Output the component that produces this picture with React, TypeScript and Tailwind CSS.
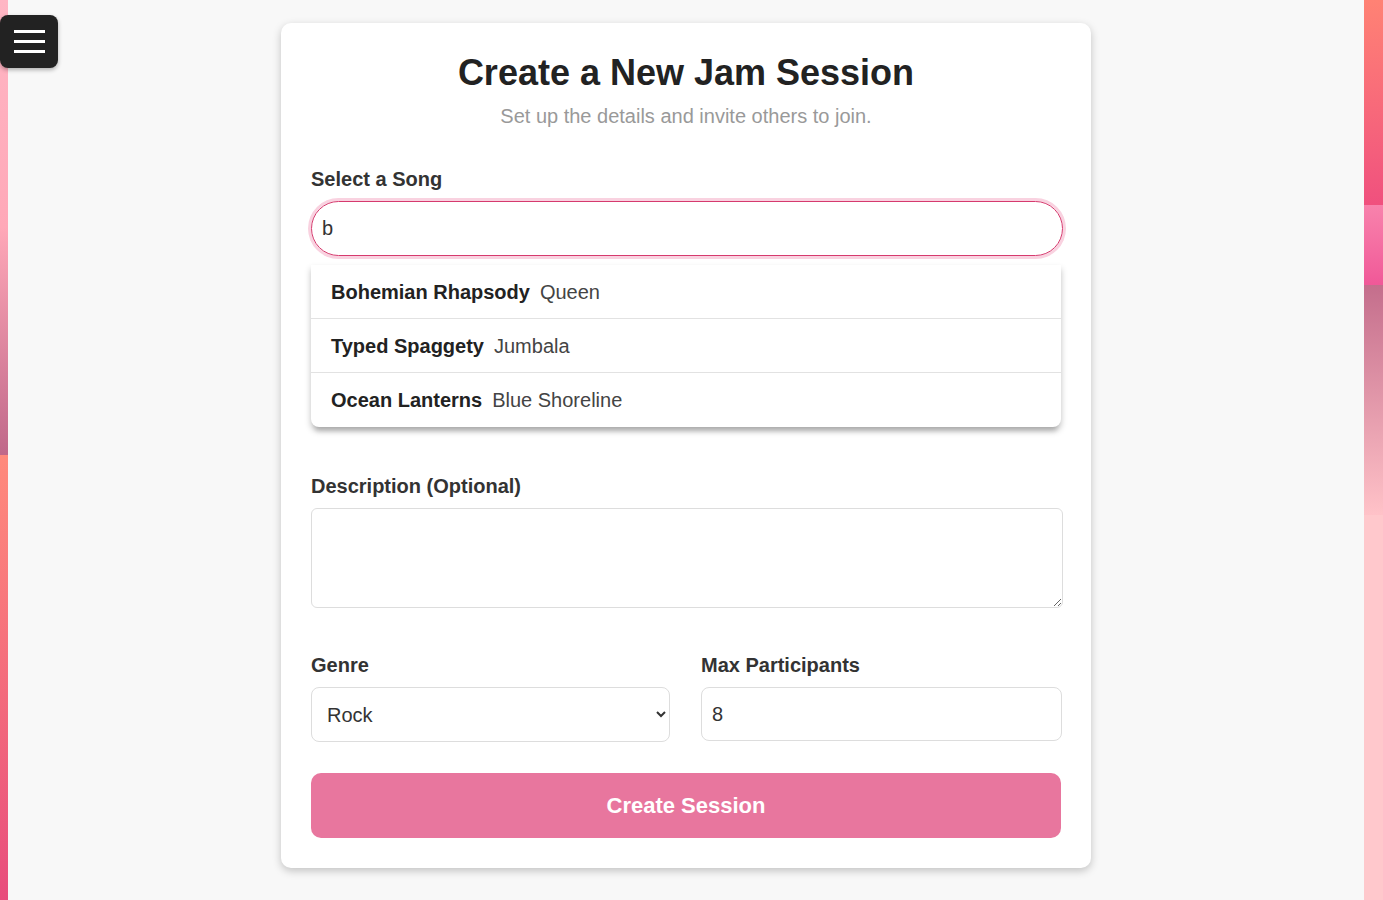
import React, { useState } from 'react';

const songs = [
  { title: 'Bohemian Rhapsody', artist: 'Queen' },
  { title: 'Typed Spaggety', artist: 'Jumbala' },
  { title: 'Ocean Lanterns', artist: 'Blue Shoreline' },
];

function LeftStrip() {
  return (
    <div className="w-[8px] shrink-0 flex flex-col">
      <div className="h-[455px] bg-gradient-to-b from-[#ffb6c4] via-[#ffa8b8] to-[#c0688a]" />
      <div className="flex-1 bg-gradient-to-b from-[#ff8a7c] to-[#e84c7c]" />
    </div>
  );
}

function RightStrip() {
  return (
    <div className="w-[19px] shrink-0 flex flex-col">
      <div className="h-[205px] bg-gradient-to-b from-[#ff8274] to-[#f0507e]" />
      <div className="h-[80px] bg-gradient-to-b from-[#f882ac] to-[#f05898]" />
      <div className="h-[230px] bg-gradient-to-b from-[#c46e8c] to-[#ffc2c8]" />
      <div className="flex-1 bg-[#ffc8cc]" />
    </div>
  );
}

function MenuButton() {
  return (
    <button className="absolute top-[15px] left-0 w-[58px] h-[53px] bg-[#222222] rounded-lg shadow-[0_2px_4px_rgba(0,0,0,0.3)] flex flex-col items-center justify-center gap-[7px]">
      <span className="block w-[31px] h-[3px] bg-white" />
      <span className="block w-[31px] h-[3px] bg-white" />
      <span className="block w-[31px] h-[3px] bg-white" />
    </button>
  );
}

export default function App() {
  const [query, setQuery] = useState('b');

  return (
    <div className="relative flex min-h-[900px] bg-[#f8f8f8] font-['Liberation_Sans',Arial,sans-serif]">
      <LeftStrip />
      <main className="flex-1 flex justify-center pt-[23px]">
        <div className="w-[810px] h-[845px] bg-white rounded-[10px] shadow-[0_3px_9px_rgba(0,0,0,0.22)] px-[30px] pt-[28px] pb-[30px] flex flex-col">
          <h1 className="text-[36px] leading-[44px] font-bold text-[#222] text-center">Create a New Jam Session</h1>
          <p className="mt-[9px] text-[20px] leading-[24px] text-[#999] text-center">Set up the details and invite others to join.</p>

          <div className="relative mt-[39px]">
            <label className="block text-[20px] leading-[24px] font-bold text-[#333]">Select a Song</label>
            <input
              value={query}
              onChange={(e) => setQuery(e.target.value)}
              className="mt-[10px] block w-[752px] h-[55px] rounded-full border border-[#d63a6e] px-[10px] text-[20px] text-[#333] outline-none shadow-[0_0_0_3px_#f9d2e0]"
            />
            <div className="absolute left-0 w-[750px] top-[98px] z-10 bg-white rounded-b-lg shadow-[0_4px_6px_rgba(0,0,0,0.25),0_8px_4px_-4px_rgba(0,0,0,0.12)]">
              {songs.map((s, i) => (
                <div
                  key={s.title}
                  className={`h-[54px] flex items-center px-[20px] text-[20px] ${i < songs.length - 1 ? 'border-b border-[#e2e2e2]' : ''}`}
                >
                  <span className="font-bold text-[#222]">{s.title}</span>
                  <span className="ml-[10px] text-[#444]">{s.artist}</span>
                </div>
              ))}
            </div>
          </div>

          <div className="h-[218px]" />

          <label className="block text-[20px] leading-[24px] font-bold text-[#333]">Description (Optional)</label>
          <textarea className="mt-[10px] block w-[752px] h-[100px] border border-[#dddddd] rounded-md p-[10px] text-[18px] outline-none" />

          <div className="mt-[45px] grid grid-cols-[359px_361px] gap-[31px]">
            <div>
              <label className="block text-[20px] leading-[24px] font-bold text-[#333]">Genre</label>
              <select className="mt-[10px] block w-full h-[55px] border border-[#dddddd] rounded-lg bg-white pl-[11px] pr-[6px] text-[20px] text-[#333] outline-none">
                <option>Rock</option>
                <option>Pop</option>
                <option>Jazz</option>
              </select>
            </div>
            <div>
              <label className="block text-[20px] leading-[24px] font-bold text-[#333]">Max Participants</label>
              <input
                type="number"
                defaultValue={8}
                className="mt-[10px] block w-full h-[54px] border border-[#dddddd] rounded-lg px-[10px] text-[20px] text-[#333] outline-none"
              />
            </div>
          </div>

          <button className="mt-[31px] w-[750px] h-[65px] rounded-[10px] bg-[#e8769e] text-white text-[22px] font-bold">
            Create Session
          </button>
        </div>
      </main>
      <RightStrip />
      <MenuButton />
    </div>
  );
}
